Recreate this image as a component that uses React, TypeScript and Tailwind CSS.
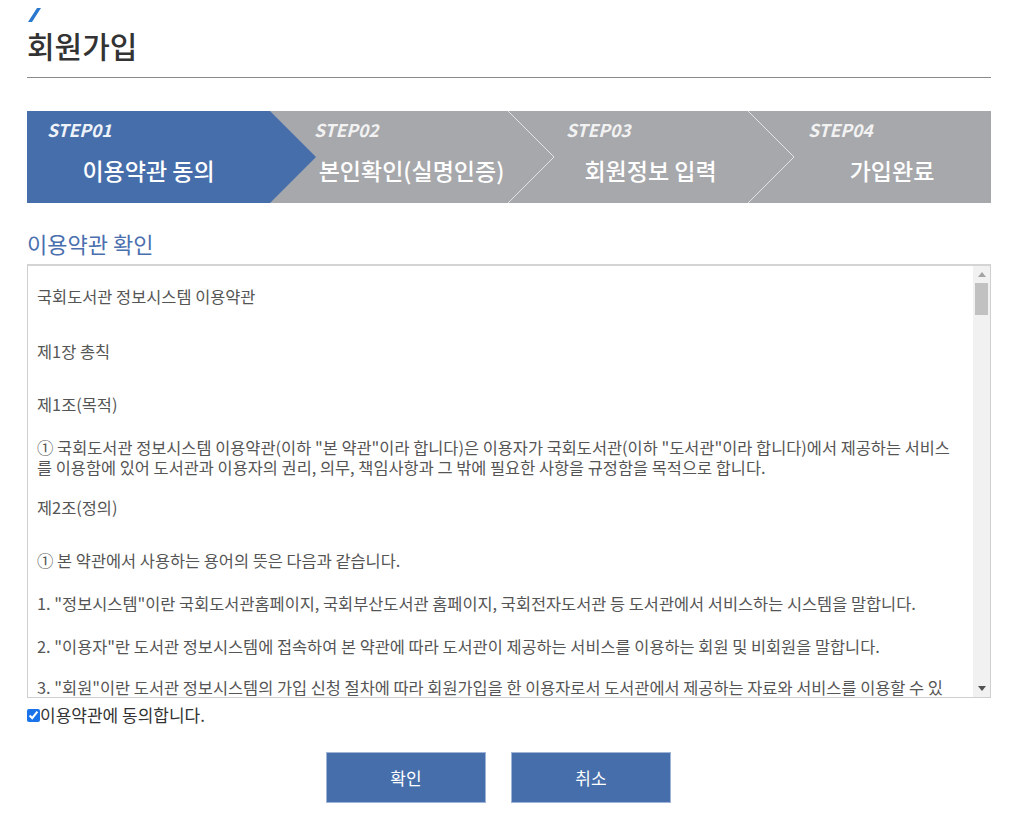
import React from "react";

const steps = [
  { label: "STEP01", title: "이용약관 동의", labelPad: "pl-[20px]", titlePad: "" },
  { label: "STEP02", title: "본인확인(실명인증)", labelPad: "pl-[44px]", titlePad: "pl-[45px]" },
  { label: "STEP03", title: "회원정보 입력", labelPad: "pl-[58px]", titlePad: "pl-[45px]" },
  { label: "STEP04", title: "가입완료", labelPad: "pl-[60px]", titlePad: "pl-[45px]" },
];

const terms: { text: React.ReactNode; mt: string }[] = [
  { text: "국회도서관 정보시스템 이용약관", mt: "mt-0" },
  { text: "제1장 총칙", mt: "mt-[35px]" },
  { text: "제1조(목적)", mt: "mt-[33px]" },
  {
    text: (
      <>
        ① 국회도서관 정보시스템 이용약관(이하 "본 약관"이라 합니다)은 이용자가 국회도서관(이하 "도서관"이라 합니다)에서 제공하는 서비스
        <br />를 이용함에 있어 도서관과 이용자의 권리, 의무, 책임사항과 그 밖에 필요한 사항을 규정함을 목적으로 합니다.
      </>
    ),
    mt: "mt-[23px]",
  },
  { text: "제2조(정의)", mt: "mt-[20px]" },
  { text: "① 본 약관에서 사용하는 용어의 뜻은 다음과 같습니다.", mt: "mt-[33px]" },
  {
    text: '1. "정보시스템"이란 국회도서관홈페이지, 국회부산도서관 홈페이지, 국회전자도서관 등 도서관에서 서비스하는 시스템을 말합니다.',
    mt: "mt-[23px]",
  },
  {
    text: '2. "이용자"란 도서관 정보시스템에 접속하여 본 약관에 따라 도서관이 제공하는 서비스를 이용하는 회원 및 비회원을 말합니다.',
    mt: "mt-[23px]",
  },
  {
    text: (
      <>
        3. "회원"이란 도서관 정보시스템의 가입 신청 절차에 따라 회원가입을 한 이용자로서 도서관에서 제공하는 자료와 서비스를 이용할 수 있
        <br />는 자를 말합니다.
      </>
    ),
    mt: "mt-[21px]",
  },
  {
    text: '4. "비회원"이란 회원가입을 하지 않고 도서관에서 제공하는 서비스를 이용하는 자를 말합니다.',
    mt: "mt-[21px]",
  },
];

export default function App() {
  return (
    <div
      className="min-h-screen bg-white pb-[20px] pl-[27px] pr-[33px] pt-[8px] text-[#333]"
      style={{ fontFamily: '"Noto Sans CJK KR", "Noto Sans", sans-serif' }}
    >
      {/* title */}
      <svg width="14" height="15" viewBox="0 0 14 15" className="ml-[1px] block">
        <polygon points="0,14 4,14 13,0 9,0" fill="#2b78cf" />
      </svg>
      <h1 className="mt-[2px] text-[30px] font-medium leading-[40px] text-[#333]">회원가입</h1>
      <div className="mt-[12px] h-px bg-[#8a8a8a]" />

      {/* steps */}
      <div className="relative mt-[33px] h-[92px]">
        <svg
          className="absolute inset-0 h-full w-full"
          viewBox="0 0 964 92"
          preserveAspectRatio="none"
        >
          <rect x="0" y="0" width="964" height="92" fill="#a7a8ab" />
          <polygon points="0,0 243,0 289,46 243,92 0,92" fill="#466eab" />
          <polyline points="481,0 527,46 481,92" fill="none" stroke="#e4e4e6" strokeWidth="1" />
          <polyline points="721,0 767,46 721,92" fill="none" stroke="#e4e4e6" strokeWidth="1" />
        </svg>
        <div className="relative grid h-full grid-cols-[243px_238px_240px_243px]">
          {steps.map((s, i) => (
            <div key={s.label} className="flex flex-col pt-[7px]">
              <div
                className={`${s.labelPad} text-[17.5px] font-bold italic leading-[24px] ${
                  i === 0 ? "text-[#eef2f9]" : "text-[#f2f2f3]"
                }`}
              >
                {s.label}
              </div>
              <div
                className={`${s.titlePad} mt-[12px] text-center text-[23px] font-medium leading-[32px] text-white`}
              >
                {s.title}
              </div>
            </div>
          ))}
        </div>
      </div>

      {/* terms */}
      <h2 className="mt-[24px] text-[22px] leading-[32px] text-[#4a6fae]">이용약관 확인</h2>
      <div className="mt-[5px] flex h-[434px] border border-[#cfcfcf] border-t-2 border-t-[#d4d4d4]">
        <div className="flex-1 overflow-hidden pl-[9px] pt-[20px] text-[16.4px] leading-[20px] text-[#555]">
          {terms.map((t, i) => (
            <p key={i} className={`${t.mt} whitespace-nowrap`}>
              {t.text}
            </p>
          ))}
        </div>
        <div className="flex w-[17px] flex-col bg-[#f1f1f1]">
          <div className="flex h-[17px] items-center justify-center">
            <svg width="8" height="5" viewBox="0 0 8 5">
              <polygon points="0,5 8,5 4,0" fill="#a3a3a3" />
            </svg>
          </div>
          <div className="mx-[2px] h-[32px] bg-[#c1c1c1]" />
          <div className="flex-1" />
          <div className="flex h-[17px] items-center justify-center">
            <svg width="8" height="5" viewBox="0 0 8 5">
              <polygon points="0,0 8,0 4,5" fill="#505050" />
            </svg>
          </div>
        </div>
      </div>

      <label className="mt-[6px] flex items-center text-[17px] leading-[22px] text-[#333]">
        <input type="checkbox" defaultChecked className="m-0 h-[13px] w-[13px] shrink-0 accent-[#1a73e8]" />
        <span>이용약관에 동의합니다.</span>
      </label>

      {/* buttons */}
      <div className="mt-[26px] flex justify-center gap-[25px] pr-[21px]">
        <button className="h-[51px] w-[160px] border border-[#9fb4d6] bg-[#466eab] text-[17px] text-white">
          확인
        </button>
        <button className="h-[51px] w-[160px] border border-[#9fb4d6] bg-[#466eab] text-[17px] text-white">
          취소
        </button>
      </div>
    </div>
  );
}
